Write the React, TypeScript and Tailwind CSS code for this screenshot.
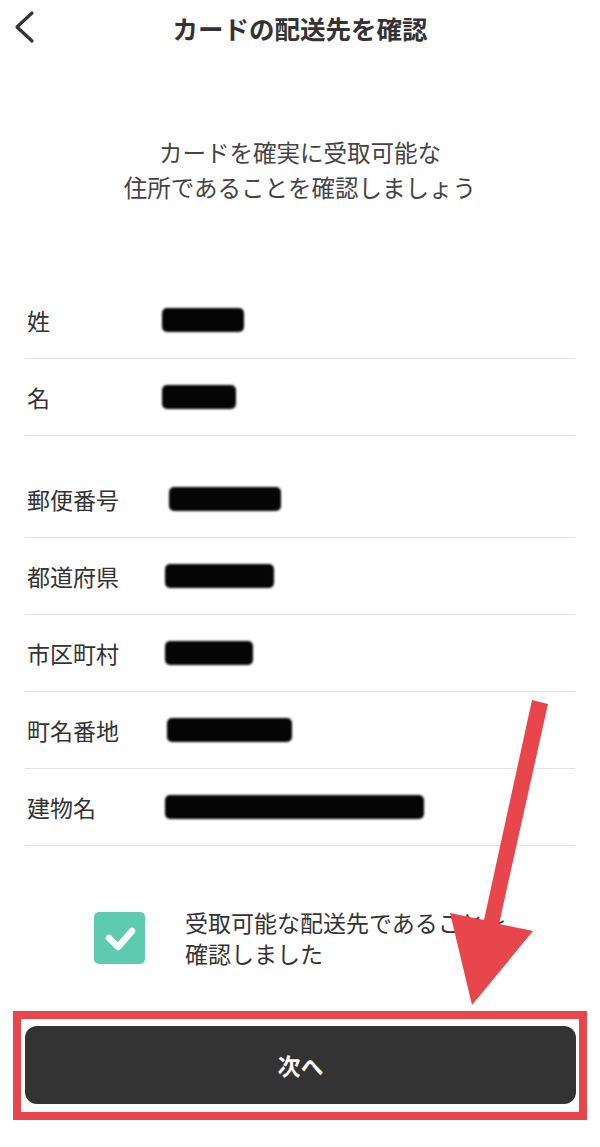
import React from "react";

const rowsA = [
  { label: "姓", x: 162, w: 82 },
  { label: "名", x: 162, w: 74 },
];
const rowsB = [
  { label: "郵便番号", x: 169, w: 112 },
  { label: "都道府県", x: 165, w: 109 },
  { label: "市区町村", x: 165, w: 88 },
  { label: "町名番地", x: 167, w: 125 },
  { label: "建物名", x: 165, w: 259 },
];

function Row({ label, x, w }: { label: string; x: number; w: number }) {
  return (
    <div className="flex h-[77px] items-center border-b border-[#e3e3e3]">
      <div className="w-[137px] shrink-0 pl-[2px] text-[23px] leading-none text-[#333]">{label}</div>
      <div
        className="h-[24px] rounded-[5px] bg-[#050505] blur-[0.8px]"
        style={{ marginLeft: x - 162, width: w }}
      />
    </div>
  );
}

export default function App() {
  return (
    <div
      className="relative h-[1147px] w-[600px] overflow-hidden bg-white text-[#333]"
      style={{ fontFamily: '"Noto Sans CJK JP", "Noto Sans", sans-serif' }}
    >
      <header className="relative flex h-[56px] items-center justify-center">
        <svg className="absolute left-[12px] top-[10px]" width="24" height="34" viewBox="0 0 24 34">
          <polyline points="20,3 5,17 20,31" fill="none" stroke="#333" strokeWidth="3.2" strokeLinecap="round" strokeLinejoin="round" />
        </svg>
        <h1 className="text-[25.5px] font-bold leading-none text-[#333]">カードの配送先を確認</h1>
      </header>

      <p className="mt-[79px] text-center text-[23.5px] leading-[35px] text-[#444]">
        カードを確実に受取可能な
        <br />
        住所であることを確認しましょう
      </p>

      <div className="mx-[25px] mt-[77px]">
        {rowsA.map((r) => (
          <Row key={r.label} {...r} />
        ))}
        <div className="h-[25px]" />
        {rowsB.map((r) => (
          <Row key={r.label} {...r} />
        ))}
      </div>

      <div className="mt-[61px] flex items-center pl-[94px]">
        <div className="flex h-[52px] w-[51px] shrink-0 items-center justify-center rounded-[5px] bg-[#5ecab0]">
          <svg width="36" height="30" viewBox="0 0 36 30">
            <polyline points="7,15 16,24 30,8" fill="none" stroke="#fff" strokeWidth="6.5" strokeLinecap="round" strokeLinejoin="round" />
          </svg>
        </div>
        <p className="ml-[40px] text-[23px] leading-[31px] text-[#333]">
          受取可能な配送先であることを
          <br />
          確認しました
        </p>
      </div>

      <div className="mx-[13px] mt-[42px] border-[8px] border-[#e8464c] pb-[8px] pl-[4px] pr-[3px] pt-[7px]">
        <button className="flex h-[78px] w-full items-center justify-center rounded-[12px] bg-[#333333] text-[23px] font-bold text-white">
          次へ
        </button>
      </div>

      <svg className="pointer-events-none absolute left-0 top-0" width="600" height="1147" viewBox="0 0 600 1147">
        <polygon
          points="532,700 548,704 499,924 533,931 472,1005 450,913 484,920"
          fill="#e8464c"
        />
      </svg>
    </div>
  );
}
